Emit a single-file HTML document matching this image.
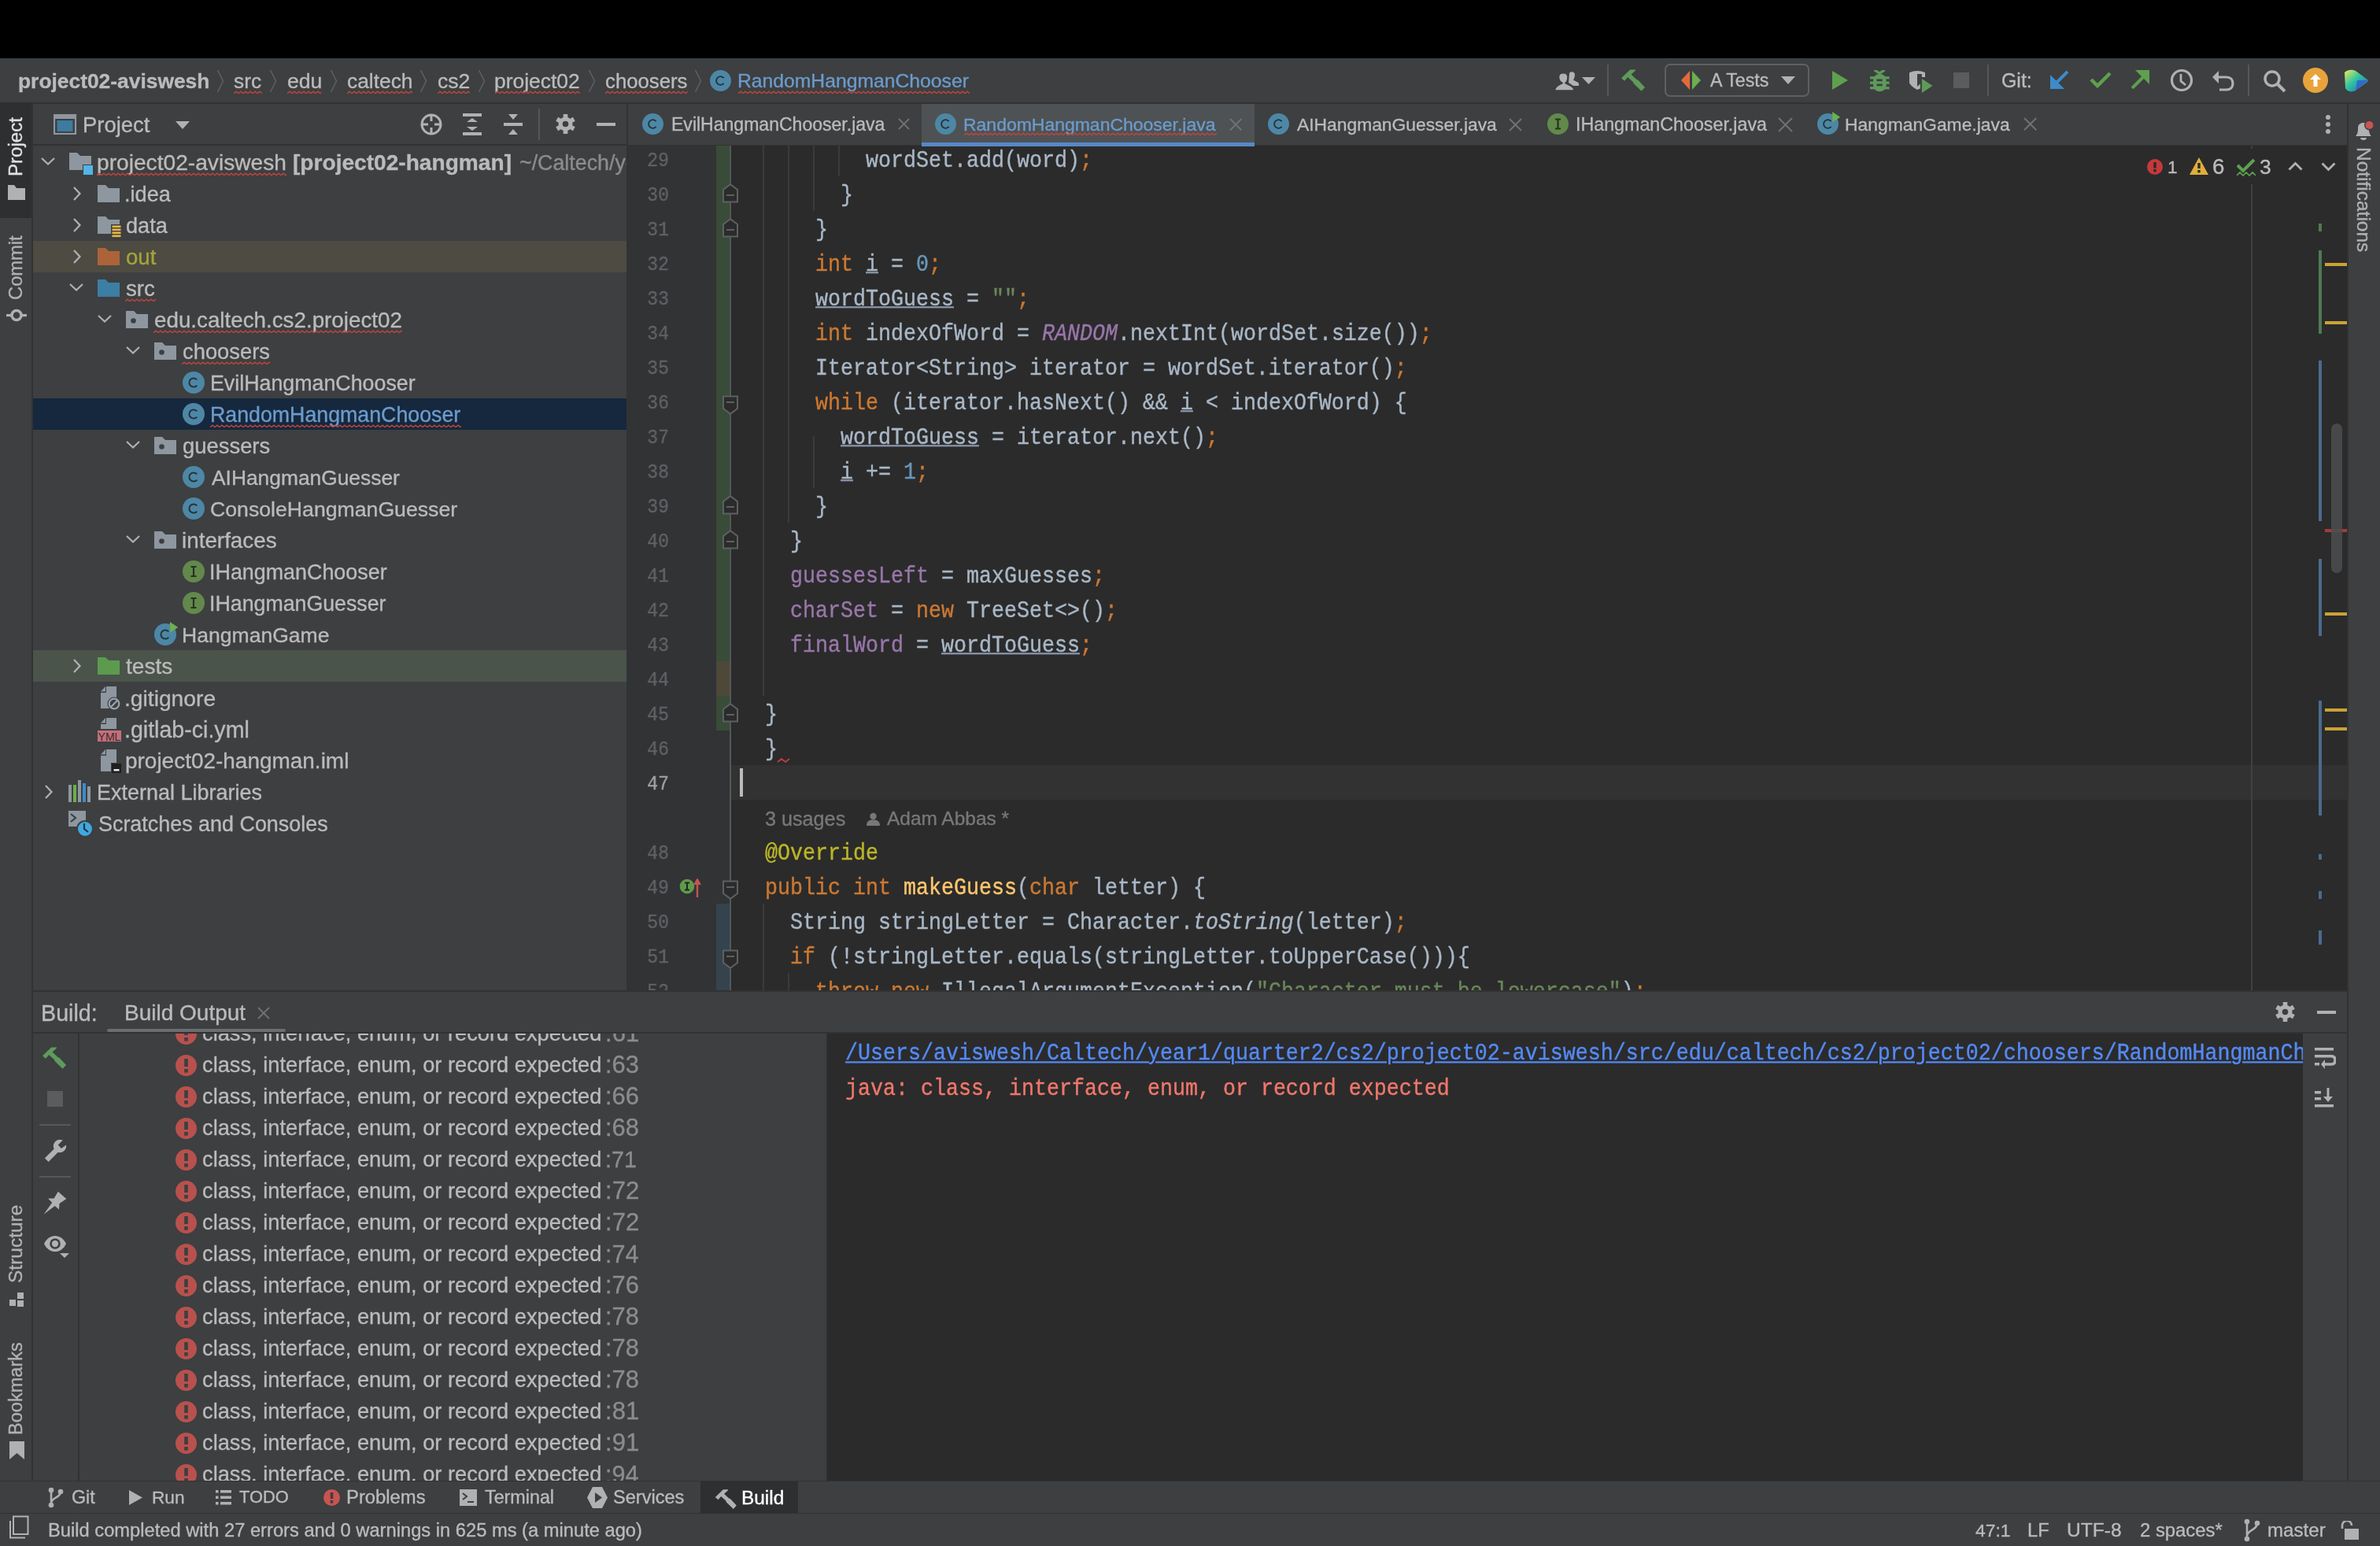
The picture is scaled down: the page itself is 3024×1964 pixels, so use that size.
<!DOCTYPE html>
<html><head><meta charset="utf-8"><style>
html,body{margin:0;padding:0;width:3024px;height:1964px;overflow:hidden;background:#000;}
body>div,body>svg{position:absolute;}
.t{white-space:pre;-webkit-text-stroke:0.35px currentColor;will-change:transform;}
</style></head><body>
<svg style="position:absolute;left:0;top:0;width:0;height:0"><defs><pattern id="sq" width="6" height="5" patternUnits="userSpaceOnUse"><path d="M0 3.8 L3 1.2 L6 3.8" fill="none" stroke="#C0443C" stroke-width="1.5"/></pattern></defs></svg>
<div style="left:0px;top:0px;width:3024px;height:74px;background:#000000;"></div>
<div style="left:0px;top:74px;width:3024px;height:56px;background:#3D3F41;"></div>
<div style="left:0px;top:130px;width:3024px;height:2px;background:#323232;"></div>
<div style="left:0px;top:132px;width:40px;height:1749px;background:#3D3F41;"></div>
<div style="left:40px;top:132px;width:2px;height:1749px;background:#323232;"></div>
<div style="left:0px;top:130px;width:40px;height:147px;background:#2D2F30;"></div>
<div style="left:2982px;top:132px;width:2px;height:1749px;background:#323232;"></div>
<div style="left:2984px;top:132px;width:40px;height:1749px;background:#3D3F41;"></div>
<div style="left:42px;top:132px;width:754px;height:1126px;background:#3D3F41;"></div>
<div style="left:42px;top:183px;width:754px;height:2px;background:#323232;"></div>
<div style="left:796px;top:132px;width:2px;height:1126px;background:#323232;"></div>
<div style="left:798px;top:132px;width:2184px;height:52px;background:#3D3F41;"></div>
<div style="left:798px;top:184px;width:2184px;height:2px;background:#323232;"></div>
<div style="left:796px;top:185px;width:131px;height:1073px;background:#313335;"></div>
<div style="left:927px;top:185px;width:2055px;height:1073px;background:#2B2B2B;"></div>
<div style="left:42px;top:1258px;width:2940px;height:2px;background:#323232;"></div>
<div style="left:42px;top:1260px;width:2940px;height:52px;background:#3D3F41;"></div>
<div style="left:42px;top:1311px;width:2940px;height:2px;background:#323232;"></div>
<div style="left:42px;top:1313px;width:57px;height:568px;background:#3D3F41;"></div>
<div style="left:99px;top:1313px;width:2px;height:568px;background:#323232;"></div>
<div style="left:101px;top:1313px;width:949px;height:568px;background:#3D3F41;"></div>
<div style="left:1050px;top:1313px;width:2px;height:568px;background:#2F2F2F;"></div>
<div style="left:1052px;top:1313px;width:1874px;height:568px;background:#2B2B2B;"></div>
<div style="left:2926px;top:1313px;width:56px;height:568px;background:#3D3F41;"></div>
<div style="left:0px;top:1881px;width:3024px;height:1px;background:#323232;"></div>
<div style="left:0px;top:1882px;width:3024px;height:40px;background:#3D3F41;"></div>
<div style="left:0px;top:1922px;width:3024px;height:1px;background:#323232;"></div>
<div style="left:0px;top:1923px;width:3024px;height:41px;background:#3D3F41;"></div>
<div class="t" style="left:22.82px;top:82.80px;font-family:'Liberation Sans', sans-serif;font-size:26.390px;line-height:40px;color:#BBBBBB;font-weight:bold;">project02-aviswesh</div>
<svg style="left:275px;top:88px;width:10px;height:30px" viewBox="0 0 10 30"><path d="M1.5 1 L8.5 15 L1.5 29" fill="none" stroke="#5D6064" stroke-width="1.6"/></svg>
<svg style="left:342px;top:88px;width:10px;height:30px" viewBox="0 0 10 30"><path d="M1.5 1 L8.5 15 L1.5 29" fill="none" stroke="#5D6064" stroke-width="1.6"/></svg>
<svg style="left:419px;top:88px;width:10px;height:30px" viewBox="0 0 10 30"><path d="M1.5 1 L8.5 15 L1.5 29" fill="none" stroke="#5D6064" stroke-width="1.6"/></svg>
<svg style="left:533px;top:88px;width:10px;height:30px" viewBox="0 0 10 30"><path d="M1.5 1 L8.5 15 L1.5 29" fill="none" stroke="#5D6064" stroke-width="1.6"/></svg>
<svg style="left:607px;top:88px;width:10px;height:30px" viewBox="0 0 10 30"><path d="M1.5 1 L8.5 15 L1.5 29" fill="none" stroke="#5D6064" stroke-width="1.6"/></svg>
<svg style="left:747px;top:88px;width:10px;height:30px" viewBox="0 0 10 30"><path d="M1.5 1 L8.5 15 L1.5 29" fill="none" stroke="#5D6064" stroke-width="1.6"/></svg>
<svg style="left:882px;top:88px;width:10px;height:30px" viewBox="0 0 10 30"><path d="M1.5 1 L8.5 15 L1.5 29" fill="none" stroke="#5D6064" stroke-width="1.6"/></svg>
<div class="t" style="left:297.47px;top:82.80px;font-family:'Liberation Sans', sans-serif;font-size:26.295px;line-height:40px;color:#BBBBBB;">src</div>
<svg style="left:297px;top:115px;width:36px;height:5px"><rect x="0" y="0" width="36" height="5" fill="url(#sq)"/></svg>
<div class="t" style="left:364.93px;top:82.81px;font-family:'Liberation Sans', sans-serif;font-size:26.627px;line-height:40px;color:#BBBBBB;">edu</div>
<svg style="left:365px;top:115px;width:43.60000000000002px;height:5px"><rect x="0" y="0" width="43.60000000000002" height="5" fill="url(#sq)"/></svg>
<div class="t" style="left:440.95px;top:82.80px;font-family:'Liberation Sans', sans-serif;font-size:26.365px;line-height:40px;color:#BBBBBB;">caltech</div>
<svg style="left:441px;top:115px;width:83px;height:5px"><rect x="0" y="0" width="83" height="5" fill="url(#sq)"/></svg>
<div class="t" style="left:555.64px;top:82.81px;font-family:'Liberation Sans', sans-serif;font-size:26.599px;line-height:40px;color:#BBBBBB;">cs2</div>
<svg style="left:555.7px;top:115px;width:41.09999999999991px;height:5px"><rect x="0" y="0" width="41.09999999999991" height="5" fill="url(#sq)"/></svg>
<div class="t" style="left:628.41px;top:82.80px;font-family:'Liberation Sans', sans-serif;font-size:26.450px;line-height:40px;color:#BBBBBB;">project02</div>
<svg style="left:629px;top:115px;width:108px;height:5px"><rect x="0" y="0" width="108" height="5" fill="url(#sq)"/></svg>
<div class="t" style="left:768.97px;top:82.80px;font-family:'Liberation Sans', sans-serif;font-size:25.755px;line-height:40px;color:#BBBBBB;">choosers</div>
<svg style="left:769px;top:115px;width:104.70000000000005px;height:5px"><rect x="0" y="0" width="104.70000000000005" height="5" fill="url(#sq)"/></svg>
<svg style="left:902px;top:89px;width:29px;height:27px;overflow:visible" viewBox="0 0 29 27"><circle cx="13.5" cy="13.5" r="13.5" fill="#4D87A5"/><path d="M17.64 10.03 A5.40 5.40 0 1 0 17.64 16.97" fill="none" stroke="#24333A" stroke-width="1.89"/></svg>
<div class="t" style="left:937.02px;top:82.78px;font-family:'Liberation Sans', sans-serif;font-size:24.715px;line-height:40px;color:#6C9BCB;">RandomHangmanChooser</div>
<svg style="left:938px;top:115px;width:294px;height:5px"><rect x="0" y="0" width="294" height="5" fill="url(#sq)"/></svg>
<svg style="left:1974px;top:90px;width:32px;height:25px" viewBox="0 0 32 25"><path d="M20 3.5 C20 0.5 27 0 27 5 C27 8 26 10 25 11.5 C26 13 33 14 33 18.5 V19 H25 L19 15 Z" fill="#AFB1B3"/><path d="M6.5 8 C6.5 1 18 1 18 8 C18 11 17 14 15 15.5 C16 17 25 18 26 24 V25 H1.5 V24 C3 18 10 17 11 15.5 C8 14 6.5 11 6.5 8 Z" fill="#AFB1B3" stroke="#3C3F41" stroke-width="1.6"/></svg>
<svg style="left:2010px;top:98px;width:17px;height:10px" viewBox="0 0 17 10"><path d="M0 0 H17 L8.5 9 Z" fill="#AFB1B3"/></svg>
<div style="left:2042px;top:82px;width:2px;height:40px;background:#555759;"></div>
<svg style="left:2058px;top:87px;width:33.0px;height:30.0px" viewBox="0 0 33 30"><path d="M2 12.3 L13.2 1.4 L20 1.4 L20 2.6 L14.6 7.6 L21.4 14 L23.2 14.4 L32 24 L27.6 28.8 L17.3 18.8 L17.3 17.6 L10.2 11.1 L6.1 15.8 Z" fill="#5E9B5A"/></svg>
<div style="left:2115px;top:81px;width:184px;height:42px;background:transparent;box-sizing:border-box;border:2px solid #5E6062;border-radius:7px;"></div>
<svg style="left:2136px;top:90px;width:25px;height:24px" viewBox="0 0 25 24"><path d="M11 0 L0 12 L11 24 Z" fill="#E06B3A"/><path d="M14 0 L25 12 L14 24 Z" fill="#6BAF4F"/></svg>
<div class="t" style="left:2172.50px;top:82.27px;font-family:'Liberation Sans', sans-serif;font-size:23.239px;line-height:40px;color:#BBBBBB;">A Tests</div>
<svg style="left:2263px;top:97px;width:18px;height:11px" viewBox="0 0 18 11"><path d="M0 0 H18 L9 10 Z" fill="#AFB1B3"/></svg>
<svg style="left:2328px;top:90px;width:20px;height:24px" viewBox="0 0 20 24"><path d="M0 0 L20 12 L0 24 Z" fill="#5FA04E"/></svg>
<svg style="left:2376px;top:88.5px;width:25px;height:28px" viewBox="0 0 25 28"><g fill="#5E9B5A"><path d="M5.6 0 L12.1 4 L18.6 0" fill="none" stroke="#5E9B5A" stroke-width="3.2"/><rect x="4.1" y="5" width="16.5" height="22.3" rx="8"/><rect x="0" y="8.2" width="24.6" height="3.2"/><rect x="0" y="14.6" width="24.6" height="3.2"/><rect x="0" y="21.2" width="24.6" height="3.2"/></g><g fill="#3C3F41"><rect x="8.5" y="11.5" width="7.3" height="2.7"/><rect x="8.5" y="17.6" width="7.3" height="2.7"/></g></svg>
<svg style="left:2426px;top:89.9px;width:30px;height:29px" viewBox="0 0 30 29"><path d="M0 2.3 Q5 0 10 0 Q15 0 20 2.1 V8.1 H15.9 V4 L10 4 V20.1 L13.8 16.4 V22.4 L10 24.1 Q3 20.5 0 15.5 Z" fill="#AFB1B3"/><path d="M15.9 10 L29.5 19 L15.9 28 Z" fill="#5E9B5A"/></svg>
<div style="left:2482px;top:92px;width:20px;height:20px;background:#5A5C5E;"></div>
<div style="left:2525px;top:82px;width:2px;height:40px;background:#555759;"></div>
<div class="t" style="left:2543.26px;top:82.29px;font-family:'Liberation Sans', sans-serif;font-size:24.897px;line-height:40px;color:#BBBBBB;">Git:</div>
<svg style="left:2605px;top:89px;width:23px;height:24px" viewBox="0 0 23 24"><path d="M22 2 L6 18" stroke="#3D8BCB" stroke-width="4" fill="none"/><path d="M0 6 V24 H18 Z" fill="#3D8BCB"/></svg>
<svg style="left:2655px;top:90px;width:28px;height:22px" viewBox="0 0 28 22"><path d="M2 11 L10 19 L26 3" stroke="#5FA04E" stroke-width="4.5" fill="none"/></svg>
<svg style="left:2708px;top:89px;width:23px;height:24px" viewBox="0 0 23 24"><path d="M1 23 L17 7" stroke="#5FA04E" stroke-width="4" fill="none"/><path d="M5 0 H23 V18 Z" fill="#5FA04E"/></svg>
<svg style="left:2757px;top:87px;width:30px;height:30px" viewBox="0 0 30 30"><circle cx="15" cy="15" r="12.5" fill="none" stroke="#AFB1B3" stroke-width="3.2"/><path d="M14 7 V16 L20 21" fill="none" stroke="#AFB1B3" stroke-width="2.8"/></svg>
<svg style="left:2811px;top:88px;width:28px;height:28px" viewBox="0 0 28 28"><path d="M6 10 H18 C23 10 26 13 26 18 C26 23 23 26 18 26 H9" fill="none" stroke="#AFB1B3" stroke-width="3.2"/><path d="M0 10 L8 2 V18 Z" fill="#AFB1B3"/></svg>
<div style="left:2856px;top:82px;width:2px;height:40px;background:#555759;"></div>
<svg style="left:2875px;top:88px;width:30px;height:30px" viewBox="0 0 30 30"><circle cx="12" cy="12" r="9" fill="none" stroke="#AFB1B3" stroke-width="3.5"/><path d="M18.5 18.5 L28 28" stroke="#AFB1B3" stroke-width="4"/></svg>
<svg style="left:2926px;top:86px;width:32px;height:32px" viewBox="0 0 32 32"><circle cx="16" cy="16" r="16" fill="#E8A33B"/><path d="M16 8 L23 15 H18.5 V24 H13.5 V15 H9 Z" fill="#FFFFFF"/></svg>
<svg style="left:2979px;top:88px;width:30px;height:29px" viewBox="0 0 30 29"><defs><linearGradient id="lg1" x1="0" y1="0" x2="1" y2="1"><stop offset="0" stop-color="#F3E85A"/><stop offset="0.45" stop-color="#2FC5A0"/><stop offset="1" stop-color="#2A56C8"/></linearGradient></defs><path d="M0 4 C4 0 10 0 14 2 L29 13 C30 14 30 15 29 16 L14 27 C8 30 3 28 1 24 Z" fill="url(#lg1)"/><path d="M16 14 L29 14 L14 27 Z" fill="#2F5FD0" opacity="0.8"/></svg>
<svg style="left:68px;top:145px;width:30px;height:26px" viewBox="0 0 30 26"><rect x="1" y="1" width="27" height="24" fill="none" stroke="#8E979F" stroke-width="2.2"/><rect x="1" y="1" width="27" height="5" fill="#8E979F"/><rect x="4.5" y="8" width="20" height="14" fill="#3D7CA0"/></svg>
<div class="t" style="left:105.41px;top:139.12px;font-family:'Liberation Sans', sans-serif;font-size:27.418px;line-height:40px;color:#BBBBBB;">Project</div>
<svg style="left:223px;top:154px;width:18px;height:11px" viewBox="0 0 18 11"><path d="M0 0 H18 L9 10 Z" fill="#AFB1B3"/></svg>
<svg style="left:534px;top:144px;width:28px;height:28px" viewBox="0 0 28 28"><circle cx="14" cy="14" r="12" fill="none" stroke="#AFB1B3" stroke-width="3"/><path d="M14 1 V10 M14 18 V27 M1 14 H10 M18 14 H27" stroke="#AFB1B3" stroke-width="3"/></svg>
<svg style="left:588px;top:144px;width:24px;height:28px" viewBox="0 0 24 28"><rect x="0" y="0" width="24" height="4" fill="#AFB1B3"/><rect x="0" y="24" width="24" height="4" fill="#AFB1B3"/><path d="M5 11 L12 6 L19 11 Z M5 17 L12 22 L19 17 Z" fill="#AFB1B3"/></svg>
<svg style="left:640px;top:145px;width:24px;height:26px" viewBox="0 0 24 26"><rect x="0" y="11" width="24" height="4" fill="#AFB1B3"/><path d="M6 0 H18 L12 7 Z M6 26 H18 L12 19 Z" fill="#AFB1B3"/></svg>
<div style="left:684px;top:138px;width:2px;height:40px;background:#555759;"></div>
<svg style="left:706px;top:145px;width:25px;height:25px" viewBox="0 0 25 25"><rect x="9.7" y="0" width="5.6" height="12.5" fill="#AFB1B3" transform="rotate(0 12.5 12.5)"/><rect x="9.7" y="0" width="5.6" height="12.5" fill="#AFB1B3" transform="rotate(60 12.5 12.5)"/><rect x="9.7" y="0" width="5.6" height="12.5" fill="#AFB1B3" transform="rotate(120 12.5 12.5)"/><rect x="9.7" y="0" width="5.6" height="12.5" fill="#AFB1B3" transform="rotate(180 12.5 12.5)"/><rect x="9.7" y="0" width="5.6" height="12.5" fill="#AFB1B3" transform="rotate(240 12.5 12.5)"/><rect x="9.7" y="0" width="5.6" height="12.5" fill="#AFB1B3" transform="rotate(300 12.5 12.5)"/><circle cx="12.5" cy="12.5" r="9.0" fill="#AFB1B3"/><circle cx="12.5" cy="12.5" r="3.8" fill="#3C3F41"/></svg>
<div style="left:758px;top:156px;width:24px;height:4px;background:#AFB1B3;"></div>
<div style="left:42px;top:306px;width:754px;height:40px;background:#4D4B42;"></div>
<div style="left:42px;top:506px;width:754px;height:40px;background:#16283D;"></div>
<div style="left:42px;top:826px;width:754px;height:40px;background:#4A544B;"></div>
<svg style="left:52px;top:198.5px;width:18px;height:12px" viewBox="0 0 18 12"><path d="M1 2 L9 9.5 L17 2" fill="none" stroke="#AFB1B3" stroke-width="2.2"/></svg>
<svg style="left:88px;top:194px;width:32px;height:30px;overflow:visible" viewBox="0 0 32 30"><path d="M0 0 H10 L14 4 H28 V22 H0 Z" fill="#8E979F"/></svg>
<div style="left:105px;top:209px;width:14px;height:14px;background:#52B4E8;box-sizing:border-box;border:1.5px solid #3C3F41;"></div>
<div class="t" style="left:123.01px;top:187.32px;font-family:'Liberation Sans', sans-serif;font-size:28.164px;line-height:40px;color:#BBBBBB;">project02-aviswesh</div>
<div class="t" style="left:371.59px;top:187.32px;font-family:'Liberation Sans', sans-serif;font-size:28.129px;line-height:40px;color:#BBBBBB;font-weight:bold;">[project02-hangman]</div>
<div class="t" style="left:659.93px;top:187.31px;font-family:'Liberation Sans', sans-serif;font-size:26.800px;line-height:40px;color:#8C8C8C;width:136.07px;overflow:hidden;">~/Caltech/year1/quarter2/cs2/project02-aviswesh</div>
<svg style="left:123px;top:219px;width:241px;height:5px"><rect x="0" y="0" width="241" height="5" fill="url(#sq)"/></svg>
<svg style="left:91.5px;top:237px;width:12px;height:18px" viewBox="0 0 12 18"><path d="M2 1 L9.5 9 L2 17" fill="none" stroke="#AFB1B3" stroke-width="2.2"/></svg>
<svg style="left:123.5px;top:235px;width:32px;height:30px;overflow:visible" viewBox="0 0 32 30"><path d="M0 0 H10 L14 4 H28 V22 H0 Z" fill="#8E979F"/></svg>
<div class="t" style="left:158.26px;top:227.31px;font-family:'Liberation Sans', sans-serif;font-size:27.133px;line-height:40px;color:#BBBBBB;">.idea</div>
<svg style="left:91.5px;top:277px;width:12px;height:18px" viewBox="0 0 12 18"><path d="M2 1 L9.5 9 L2 17" fill="none" stroke="#AFB1B3" stroke-width="2.2"/></svg>
<svg style="left:123.5px;top:275px;width:32px;height:30px;overflow:visible" viewBox="0 0 32 30"><path d="M0 0 H10 L14 4 H28 V22 H0 Z" fill="#8E979F"/></svg>
<svg style="left:141px;top:285px;width:14px;height:18px" viewBox="0 0 14 18"><rect x="0" y="0" width="14" height="18" fill="#3C3F41"/><rect x="1.5" y="1.5" width="11" height="2.6" fill="#E8B64A"/><rect x="1.5" y="5.5" width="11" height="2.6" fill="#E8B64A"/><rect x="1.5" y="9.5" width="11" height="2.6" fill="#E8B64A"/><rect x="1.5" y="13.5" width="11" height="2.6" fill="#E8B64A"/></svg>
<div class="t" style="left:159.62px;top:267.31px;font-family:'Liberation Sans', sans-serif;font-size:27.118px;line-height:40px;color:#BBBBBB;">data</div>
<svg style="left:91.5px;top:317px;width:12px;height:18px" viewBox="0 0 12 18"><path d="M2 1 L9.5 9 L2 17" fill="none" stroke="#AFB1B3" stroke-width="2.2"/></svg>
<svg style="left:123.5px;top:315px;width:32px;height:30px;overflow:visible" viewBox="0 0 32 30"><path d="M0 0 H10 L14 4 H28 V22 H0 Z" fill="#AC6339"/></svg>
<div class="t" style="left:159.60px;top:307.32px;font-family:'Liberation Sans', sans-serif;font-size:27.583px;line-height:40px;color:#A5A33B;">out</div>
<svg style="left:88px;top:358.5px;width:18px;height:12px" viewBox="0 0 18 12"><path d="M1 2 L9 9.5 L17 2" fill="none" stroke="#AFB1B3" stroke-width="2.2"/></svg>
<svg style="left:123.5px;top:355px;width:32px;height:30px;overflow:visible" viewBox="0 0 32 30"><path d="M0 0 H10 L14 4 H28 V22 H0 Z" fill="#3D7EA4"/></svg>
<div class="t" style="left:160.15px;top:347.32px;font-family:'Liberation Sans', sans-serif;font-size:27.687px;line-height:40px;color:#BBBBBB;">src</div>
<svg style="left:159px;top:379px;width:39px;height:5px"><rect x="0" y="0" width="39" height="5" fill="url(#sq)"/></svg>
<svg style="left:124px;top:398.5px;width:18px;height:12px" viewBox="0 0 18 12"><path d="M1 2 L9 9.5 L17 2" fill="none" stroke="#AFB1B3" stroke-width="2.2"/></svg>
<svg style="left:159.5px;top:395px;width:32px;height:30px;overflow:visible" viewBox="0 0 32 30"><path d="M0 0 H10 L14 4 H28 V22 H0 Z" fill="#8E979F"/><circle cx="9.5" cy="12.5" r="3.3" fill="#3C3F41"/></svg>
<div class="t" style="left:195.59px;top:387.32px;font-family:'Liberation Sans', sans-serif;font-size:27.785px;line-height:40px;color:#BBBBBB;">edu.caltech.cs2.project02</div>
<svg style="left:195px;top:419px;width:316px;height:5px"><rect x="0" y="0" width="316" height="5" fill="url(#sq)"/></svg>
<svg style="left:160px;top:438.5px;width:18px;height:12px" viewBox="0 0 18 12"><path d="M1 2 L9 9.5 L17 2" fill="none" stroke="#AFB1B3" stroke-width="2.2"/></svg>
<svg style="left:195.5px;top:435px;width:32px;height:30px;overflow:visible" viewBox="0 0 32 30"><path d="M0 0 H10 L14 4 H28 V22 H0 Z" fill="#8E979F"/><circle cx="9.5" cy="12.5" r="3.3" fill="#3C3F41"/></svg>
<div class="t" style="left:231.61px;top:427.31px;font-family:'Liberation Sans', sans-serif;font-size:27.360px;line-height:40px;color:#BBBBBB;">choosers</div>
<svg style="left:231px;top:459px;width:112px;height:5px"><rect x="0" y="0" width="112" height="5" fill="url(#sq)"/></svg>
<svg style="left:231.5px;top:472px;width:30px;height:28px;overflow:visible" viewBox="0 0 30 28"><circle cx="14.0" cy="14.0" r="14.0" fill="#4D87A5"/><path d="M18.29 10.40 A5.60 5.60 0 1 0 18.29 17.60" fill="none" stroke="#24333A" stroke-width="1.96"/></svg>
<div class="t" style="left:266.56px;top:467.31px;font-family:'Liberation Sans', sans-serif;font-size:26.811px;line-height:40px;color:#BBBBBB;">EvilHangmanChooser</div>
<svg style="left:231.5px;top:512px;width:30px;height:28px;overflow:visible" viewBox="0 0 30 28"><circle cx="14.0" cy="14.0" r="14.0" fill="#4D87A5"/><path d="M18.29 10.40 A5.60 5.60 0 1 0 18.29 17.60" fill="none" stroke="#24333A" stroke-width="1.96"/></svg>
<div class="t" style="left:266.56px;top:507.31px;font-family:'Liberation Sans', sans-serif;font-size:26.766px;line-height:40px;color:#6C9BCB;">RandomHangmanChooser</div>
<svg style="left:267px;top:539px;width:319px;height:5px"><rect x="0" y="0" width="319" height="5" fill="url(#sq)"/></svg>
<svg style="left:160px;top:558.5px;width:18px;height:12px" viewBox="0 0 18 12"><path d="M1 2 L9 9.5 L17 2" fill="none" stroke="#AFB1B3" stroke-width="2.2"/></svg>
<svg style="left:195.5px;top:555px;width:32px;height:30px;overflow:visible" viewBox="0 0 32 30"><path d="M0 0 H10 L14 4 H28 V22 H0 Z" fill="#8E979F"/><circle cx="9.5" cy="12.5" r="3.3" fill="#3C3F41"/></svg>
<div class="t" style="left:231.60px;top:547.32px;font-family:'Liberation Sans', sans-serif;font-size:27.410px;line-height:40px;color:#BBBBBB;">guessers</div>
<svg style="left:231.5px;top:592px;width:30px;height:28px;overflow:visible" viewBox="0 0 30 28"><circle cx="14.0" cy="14.0" r="14.0" fill="#4D87A5"/><path d="M18.29 10.40 A5.60 5.60 0 1 0 18.29 17.60" fill="none" stroke="#24333A" stroke-width="1.96"/></svg>
<div class="t" style="left:268.70px;top:587.30px;font-family:'Liberation Sans', sans-serif;font-size:26.373px;line-height:40px;color:#BBBBBB;">AIHangmanGuesser</div>
<svg style="left:231.5px;top:632px;width:30px;height:28px;overflow:visible" viewBox="0 0 30 28"><circle cx="14.0" cy="14.0" r="14.0" fill="#4D87A5"/><path d="M18.29 10.40 A5.60 5.60 0 1 0 18.29 17.60" fill="none" stroke="#24333A" stroke-width="1.96"/></svg>
<div class="t" style="left:267.37px;top:627.31px;font-family:'Liberation Sans', sans-serif;font-size:26.678px;line-height:40px;color:#BBBBBB;">ConsoleHangmanGuesser</div>
<svg style="left:160px;top:678.5px;width:18px;height:12px" viewBox="0 0 18 12"><path d="M1 2 L9 9.5 L17 2" fill="none" stroke="#AFB1B3" stroke-width="2.2"/></svg>
<svg style="left:195.5px;top:675px;width:32px;height:30px;overflow:visible" viewBox="0 0 32 30"><path d="M0 0 H10 L14 4 H28 V22 H0 Z" fill="#8E979F"/><circle cx="9.5" cy="12.5" r="3.3" fill="#3C3F41"/></svg>
<div class="t" style="left:231.03px;top:667.32px;font-family:'Liberation Sans', sans-serif;font-size:27.842px;line-height:40px;color:#BBBBBB;">interfaces</div>
<svg style="left:231.5px;top:712px;width:28px;height:28px" viewBox="0 0 28 28"><circle cx="14.0" cy="14.0" r="14.0" fill="#62894B"/><path d="M10.5 8.0 H17.5 M14.0 8.0 V20.0 M10.5 20.0 H17.5" stroke="#27331F" stroke-width="2.2" fill="none"/></svg>
<div class="t" style="left:266.28px;top:707.31px;font-family:'Liberation Sans', sans-serif;font-size:26.886px;line-height:40px;color:#BBBBBB;">IHangmanChooser</div>
<svg style="left:231.5px;top:752px;width:28px;height:28px" viewBox="0 0 28 28"><circle cx="14.0" cy="14.0" r="14.0" fill="#62894B"/><path d="M10.5 8.0 H17.5 M14.0 8.0 V20.0 M10.5 20.0 H17.5" stroke="#27331F" stroke-width="2.2" fill="none"/></svg>
<div class="t" style="left:266.29px;top:747.31px;font-family:'Liberation Sans', sans-serif;font-size:26.767px;line-height:40px;color:#BBBBBB;">IHangmanGuesser</div>
<svg style="left:196px;top:792px;width:30px;height:28px;overflow:visible" viewBox="0 0 30 28"><circle cx="14.0" cy="14.0" r="14.0" fill="#4D87A5"/><path d="M18.29 10.40 A5.60 5.60 0 1 0 18.29 17.60" fill="none" stroke="#24333A" stroke-width="1.96"/><path d="M19.8 -2.0 L30.3 5.0 L20.2 11.6 Z" fill="#6DB04F"/></svg>
<div class="t" style="left:230.57px;top:787.31px;font-family:'Liberation Sans', sans-serif;font-size:26.574px;line-height:40px;color:#BBBBBB;">HangmanGame</div>
<svg style="left:91.5px;top:837px;width:12px;height:18px" viewBox="0 0 12 18"><path d="M2 1 L9.5 9 L2 17" fill="none" stroke="#AFB1B3" stroke-width="2.2"/></svg>
<svg style="left:123.5px;top:835px;width:32px;height:30px;overflow:visible" viewBox="0 0 32 30"><path d="M0 0 H10 L14 4 H28 V22 H0 Z" fill="#5C9B4E"/></svg>
<div class="t" style="left:160.42px;top:827.32px;font-family:'Liberation Sans', sans-serif;font-size:28.043px;line-height:40px;color:#BBBBBB;">tests</div>
<svg style="left:128px;top:872px;width:30px;height:31px" viewBox="0 0 30 31"><path d="M7 0 H20 V28 H0 V8 H7 Z" fill="#8E979F"/><path d="M0 6.5 L6 0 V6.5 Z" fill="#8E979F"/><circle cx="17" cy="22" r="8.5" fill="#3C3F41"/><circle cx="17" cy="22" r="6.3" fill="none" stroke="#9AA3AB" stroke-width="2.2"/><path d="M12.8 26.2 L21.2 17.8" stroke="#9AA3AB" stroke-width="2.2"/></svg>
<div class="t" style="left:158.16px;top:867.32px;font-family:'Liberation Sans', sans-serif;font-size:28.237px;line-height:40px;color:#BBBBBB;">.gitignore</div>
<svg style="left:124px;top:912px;width:31px;height:31px" viewBox="0 0 31 31"><path d="M11 0 H24 V14 H4 V8 H11 Z" fill="#8E979F"/><path d="M4 6.5 L10 0 V6.5 Z" fill="#8E979F"/><rect x="0" y="16" width="30" height="14" fill="#C4707A"/><text x="15" y="28.8" font-family="Liberation Sans" font-size="14" fill="#3B2A2D" text-anchor="middle">YML</text></svg>
<div class="t" style="left:158.13px;top:907.33px;font-family:'Liberation Sans', sans-serif;font-size:28.587px;line-height:40px;color:#BBBBBB;">.gitlab-ci.yml</div>
<svg style="left:128px;top:952px;width:27px;height:31px" viewBox="0 0 27 31"><path d="M7 0 H20 V28 H0 V8 H7 Z" fill="#8E979F"/><path d="M0 6.5 L6 0 V6.5 Z" fill="#8E979F"/><rect x="13" y="17" width="13" height="13" fill="#3C3F41"/><rect x="14" y="18" width="12" height="12" fill="#1F1F1F"/><rect x="16.5" y="25" width="7" height="2.5" fill="#E8E8E8"/></svg>
<div class="t" style="left:159.02px;top:947.32px;font-family:'Liberation Sans', sans-serif;font-size:27.961px;line-height:40px;color:#BBBBBB;">project02-hangman.iml</div>
<svg style="left:55.5px;top:997px;width:12px;height:18px" viewBox="0 0 12 18"><path d="M2 1 L9.5 9 L2 17" fill="none" stroke="#AFB1B3" stroke-width="2.2"/></svg>
<svg style="left:87px;top:991px;width:30px;height:28px" viewBox="0 0 30 28"><rect x="0" y="6" width="4" height="22" fill="#8E979F"/><rect x="6" y="6" width="4" height="22" fill="#6DAF4A"/><rect x="12" y="0" width="4" height="28" fill="#8E979F"/><rect x="18" y="4" width="4" height="24" fill="#3D8BCB"/><rect x="24" y="8" width="4" height="20" fill="#8E979F"/></svg>
<div class="t" style="left:123.44px;top:987.31px;font-family:'Liberation Sans', sans-serif;font-size:26.997px;line-height:40px;color:#BBBBBB;">External Libraries</div>
<svg style="left:87px;top:1030px;width:32px;height:34px" viewBox="0 0 32 34"><rect x="0" y="0" width="22" height="20" fill="#8E979F"/><path d="M3 4 L9 9 L3 14" fill="none" stroke="#3C3F41" stroke-width="2.2"/><circle cx="21" cy="23" r="11" fill="#3C3F41"/><circle cx="21" cy="23" r="9" fill="#40A8E0"/><path d="M20 16 V23 L25 27" stroke="#1E3342" stroke-width="2.2" fill="none"/></svg>
<div class="t" style="left:124.52px;top:1027.31px;font-family:'Liberation Sans', sans-serif;font-size:26.919px;line-height:40px;color:#BBBBBB;">Scratches and Consoles</div>
<div style="left:796px;top:186px;width:2px;height:40px;background:#323232;"></div>
<div style="left:1170.7px;top:132px;width:423.3px;height:52px;background:#4E5254;"></div>
<div style="left:1170.7px;top:181px;width:423.3px;height:5px;background:#5888C6;"></div>
<svg style="left:816px;top:144px;width:29px;height:27px;overflow:visible" viewBox="0 0 29 27"><circle cx="13.5" cy="13.5" r="13.5" fill="#4D87A5"/><path d="M17.64 10.03 A5.40 5.40 0 1 0 17.64 16.97" fill="none" stroke="#24333A" stroke-width="1.89"/></svg>
<div class="t" style="left:852.66px;top:138.27px;font-family:'Liberation Sans', sans-serif;font-size:23.044px;line-height:40px;color:#BBBBBB;">EvilHangmanChooser.java</div>
<svg style="left:1140.5px;top:150.45000000000005px;width:15.099999999999909px;height:15.099999999999909px" viewBox="0 0 15.099999999999909 15.099999999999909"><path d="M1 1 L14.099999999999909 14.099999999999909 M14.099999999999909 1 L1 14.099999999999909" stroke="#6E7275" stroke-width="2"/></svg>
<svg style="left:1188px;top:144px;width:29px;height:27px;overflow:visible" viewBox="0 0 29 27"><circle cx="13.5" cy="13.5" r="13.5" fill="#4D87A5"/><path d="M17.64 10.03 A5.40 5.40 0 1 0 17.64 16.97" fill="none" stroke="#24333A" stroke-width="1.89"/></svg>
<div class="t" style="left:1224.16px;top:138.26px;font-family:'Liberation Sans', sans-serif;font-size:22.989px;line-height:40px;color:#6C9BCB;">RandomHangmanChooser.java</div>
<svg style="left:1561.6px;top:149.79999999999995px;width:16.40000000000009px;height:16.40000000000009px" viewBox="0 0 16.40000000000009 16.40000000000009"><path d="M1 1 L15.400000000000091 15.400000000000091 M15.400000000000091 1 L1 15.400000000000091" stroke="#6E7275" stroke-width="2"/></svg>
<svg style="left:1610.5px;top:144px;width:29px;height:27px;overflow:visible" viewBox="0 0 29 27"><circle cx="13.5" cy="13.5" r="13.5" fill="#4D87A5"/><path d="M17.64 10.03 A5.40 5.40 0 1 0 17.64 16.97" fill="none" stroke="#24333A" stroke-width="1.89"/></svg>
<div class="t" style="left:1648.00px;top:138.26px;font-family:'Liberation Sans', sans-serif;font-size:22.840px;line-height:40px;color:#BBBBBB;">AIHangmanGuesser.java</div>
<svg style="left:1917px;top:149.5px;width:17px;height:17px" viewBox="0 0 17 17"><path d="M1 1 L16 16 M16 1 L1 16" stroke="#6E7275" stroke-width="2"/></svg>
<svg style="left:1966px;top:144px;width:27px;height:27px" viewBox="0 0 27 27"><circle cx="13.5" cy="13.5" r="13.5" fill="#62894B"/><path d="M10.0 7.5 H17.0 M13.5 7.5 V19.5 M10.0 19.5 H17.0" stroke="#27331F" stroke-width="2.2" fill="none"/></svg>
<div class="t" style="left:2001.91px;top:138.27px;font-family:'Liberation Sans', sans-serif;font-size:23.252px;line-height:40px;color:#BBBBBB;">IHangmanChooser.java</div>
<svg style="left:2259px;top:148.5px;width:19px;height:19px" viewBox="0 0 19 19"><path d="M1 1 L18 18 M18 1 L1 18" stroke="#6E7275" stroke-width="2"/></svg>
<svg style="left:2308.6px;top:144px;width:29px;height:27px;overflow:visible" viewBox="0 0 29 27"><circle cx="13.5" cy="13.5" r="13.5" fill="#4D87A5"/><path d="M17.64 10.03 A5.40 5.40 0 1 0 17.64 16.97" fill="none" stroke="#24333A" stroke-width="1.89"/><path d="M19.1 -1.9 L29.2 4.8 L19.5 11.2 Z" fill="#6DB04F"/></svg>
<div class="t" style="left:2344.17px;top:138.26px;font-family:'Liberation Sans', sans-serif;font-size:22.869px;line-height:40px;color:#BBBBBB;">HangmanGame.java</div>
<svg style="left:2570.7px;top:149.3499999999999px;width:17.300000000000182px;height:17.300000000000182px" viewBox="0 0 17.300000000000182 17.300000000000182"><path d="M1 1 L16.300000000000182 16.300000000000182 M16.300000000000182 1 L1 16.300000000000182" stroke="#6E7275" stroke-width="2"/></svg>
<svg style="left:1225px;top:168px;width:321px;height:5px"><rect x="0" y="0" width="321" height="5" fill="url(#sq)"/></svg>
<div style="left:2955px;top:145.8px;width:6.4px;height:6.4px;background:#AFB1B3;border-radius:50%;"></div>
<div style="left:2955px;top:154.8px;width:6.4px;height:6.4px;background:#AFB1B3;border-radius:50%;"></div>
<div style="left:2955px;top:163.8px;width:6.4px;height:6.4px;background:#AFB1B3;border-radius:50%;"></div>
<div style="left:910px;top:185px;width:17px;height:655px;background:#384C38;"></div>
<div style="left:910px;top:840px;width:17px;height:44px;background:#4D4838;"></div>
<div style="left:910px;top:884px;width:17px;height:44px;background:#384C38;"></div>
<div style="left:910px;top:1148px;width:17px;height:110px;background:#34434E;"></div>
<div style="left:929px;top:972px;width:2053px;height:44px;background:#323232;"></div>
<div style="left:927px;top:185px;width:2px;height:1073px;background:#555759;"></div>
<svg style="left:918px;top:233px;width:20px;height:25px" viewBox="0 0 20 25"><path d="M1 23.5 V8 L10 1.2 L19 8 V23.5 Z" fill="#2B2B2B" stroke="#5D6063" stroke-width="2"/><path d="M5 15 H15" stroke="#5D6063" stroke-width="2"/></svg>
<svg style="left:918px;top:277px;width:20px;height:25px" viewBox="0 0 20 25"><path d="M1 23.5 V8 L10 1.2 L19 8 V23.5 Z" fill="#2B2B2B" stroke="#5D6063" stroke-width="2"/><path d="M5 15 H15" stroke="#5D6063" stroke-width="2"/></svg>
<svg style="left:918px;top:629px;width:20px;height:25px" viewBox="0 0 20 25"><path d="M1 23.5 V8 L10 1.2 L19 8 V23.5 Z" fill="#2B2B2B" stroke="#5D6063" stroke-width="2"/><path d="M5 15 H15" stroke="#5D6063" stroke-width="2"/></svg>
<svg style="left:918px;top:673px;width:20px;height:25px" viewBox="0 0 20 25"><path d="M1 23.5 V8 L10 1.2 L19 8 V23.5 Z" fill="#2B2B2B" stroke="#5D6063" stroke-width="2"/><path d="M5 15 H15" stroke="#5D6063" stroke-width="2"/></svg>
<svg style="left:918px;top:893px;width:20px;height:25px" viewBox="0 0 20 25"><path d="M1 23.5 V8 L10 1.2 L19 8 V23.5 Z" fill="#2B2B2B" stroke="#5D6063" stroke-width="2"/><path d="M5 15 H15" stroke="#5D6063" stroke-width="2"/></svg>
<svg style="left:918px;top:501.5px;width:20px;height:25px" viewBox="0 0 20 25"><path d="M1 1.5 V17 L10 23.8 L19 17 V1.5 Z" fill="#2B2B2B" stroke="#5D6063" stroke-width="2"/><path d="M5 9 H15" stroke="#5D6063" stroke-width="2"/></svg>
<svg style="left:918px;top:1117.5px;width:20px;height:25px" viewBox="0 0 20 25"><path d="M1 1.5 V17 L10 23.8 L19 17 V1.5 Z" fill="#2B2B2B" stroke="#5D6063" stroke-width="2"/><path d="M5 9 H15" stroke="#5D6063" stroke-width="2"/></svg>
<svg style="left:918px;top:1205.5px;width:20px;height:25px" viewBox="0 0 20 25"><path d="M1 1.5 V17 L10 23.8 L19 17 V1.5 Z" fill="#2B2B2B" stroke="#5D6063" stroke-width="2"/><path d="M5 9 H15" stroke="#5D6063" stroke-width="2"/></svg>
<div class="t" style="left:750px;top:181.7px;width:100px;text-align:right;font-family:'Liberation Mono', monospace;font-size:26.67px;line-height:44px;color:#606366;transform:scaleX(0.87);transform-origin:100% 50%;">29</div>
<div class="t" style="left:750px;top:225.7px;width:100px;text-align:right;font-family:'Liberation Mono', monospace;font-size:26.67px;line-height:44px;color:#606366;transform:scaleX(0.87);transform-origin:100% 50%;">30</div>
<div class="t" style="left:750px;top:269.7px;width:100px;text-align:right;font-family:'Liberation Mono', monospace;font-size:26.67px;line-height:44px;color:#606366;transform:scaleX(0.87);transform-origin:100% 50%;">31</div>
<div class="t" style="left:750px;top:313.7px;width:100px;text-align:right;font-family:'Liberation Mono', monospace;font-size:26.67px;line-height:44px;color:#606366;transform:scaleX(0.87);transform-origin:100% 50%;">32</div>
<div class="t" style="left:750px;top:357.7px;width:100px;text-align:right;font-family:'Liberation Mono', monospace;font-size:26.67px;line-height:44px;color:#606366;transform:scaleX(0.87);transform-origin:100% 50%;">33</div>
<div class="t" style="left:750px;top:401.7px;width:100px;text-align:right;font-family:'Liberation Mono', monospace;font-size:26.67px;line-height:44px;color:#606366;transform:scaleX(0.87);transform-origin:100% 50%;">34</div>
<div class="t" style="left:750px;top:445.7px;width:100px;text-align:right;font-family:'Liberation Mono', monospace;font-size:26.67px;line-height:44px;color:#606366;transform:scaleX(0.87);transform-origin:100% 50%;">35</div>
<div class="t" style="left:750px;top:489.7px;width:100px;text-align:right;font-family:'Liberation Mono', monospace;font-size:26.67px;line-height:44px;color:#606366;transform:scaleX(0.87);transform-origin:100% 50%;">36</div>
<div class="t" style="left:750px;top:533.7px;width:100px;text-align:right;font-family:'Liberation Mono', monospace;font-size:26.67px;line-height:44px;color:#606366;transform:scaleX(0.87);transform-origin:100% 50%;">37</div>
<div class="t" style="left:750px;top:577.7px;width:100px;text-align:right;font-family:'Liberation Mono', monospace;font-size:26.67px;line-height:44px;color:#606366;transform:scaleX(0.87);transform-origin:100% 50%;">38</div>
<div class="t" style="left:750px;top:621.7px;width:100px;text-align:right;font-family:'Liberation Mono', monospace;font-size:26.67px;line-height:44px;color:#606366;transform:scaleX(0.87);transform-origin:100% 50%;">39</div>
<div class="t" style="left:750px;top:665.7px;width:100px;text-align:right;font-family:'Liberation Mono', monospace;font-size:26.67px;line-height:44px;color:#606366;transform:scaleX(0.87);transform-origin:100% 50%;">40</div>
<div class="t" style="left:750px;top:709.7px;width:100px;text-align:right;font-family:'Liberation Mono', monospace;font-size:26.67px;line-height:44px;color:#606366;transform:scaleX(0.87);transform-origin:100% 50%;">41</div>
<div class="t" style="left:750px;top:753.7px;width:100px;text-align:right;font-family:'Liberation Mono', monospace;font-size:26.67px;line-height:44px;color:#606366;transform:scaleX(0.87);transform-origin:100% 50%;">42</div>
<div class="t" style="left:750px;top:797.7px;width:100px;text-align:right;font-family:'Liberation Mono', monospace;font-size:26.67px;line-height:44px;color:#606366;transform:scaleX(0.87);transform-origin:100% 50%;">43</div>
<div class="t" style="left:750px;top:841.7px;width:100px;text-align:right;font-family:'Liberation Mono', monospace;font-size:26.67px;line-height:44px;color:#606366;transform:scaleX(0.87);transform-origin:100% 50%;">44</div>
<div class="t" style="left:750px;top:885.7px;width:100px;text-align:right;font-family:'Liberation Mono', monospace;font-size:26.67px;line-height:44px;color:#606366;transform:scaleX(0.87);transform-origin:100% 50%;">45</div>
<div class="t" style="left:750px;top:929.7px;width:100px;text-align:right;font-family:'Liberation Mono', monospace;font-size:26.67px;line-height:44px;color:#606366;transform:scaleX(0.87);transform-origin:100% 50%;">46</div>
<div class="t" style="left:750px;top:973.7px;width:100px;text-align:right;font-family:'Liberation Mono', monospace;font-size:26.67px;line-height:44px;color:#A4A3A3;transform:scaleX(0.87);transform-origin:100% 50%;">47</div>
<div class="t" style="left:750px;top:1061.7px;width:100px;text-align:right;font-family:'Liberation Mono', monospace;font-size:26.67px;line-height:44px;color:#606366;transform:scaleX(0.87);transform-origin:100% 50%;">48</div>
<div class="t" style="left:750px;top:1105.7px;width:100px;text-align:right;font-family:'Liberation Mono', monospace;font-size:26.67px;line-height:44px;color:#606366;transform:scaleX(0.87);transform-origin:100% 50%;">49</div>
<div class="t" style="left:750px;top:1149.7px;width:100px;text-align:right;font-family:'Liberation Mono', monospace;font-size:26.67px;line-height:44px;color:#606366;transform:scaleX(0.87);transform-origin:100% 50%;">50</div>
<div class="t" style="left:750px;top:1193.7px;width:100px;text-align:right;font-family:'Liberation Mono', monospace;font-size:26.67px;line-height:44px;color:#606366;transform:scaleX(0.87);transform-origin:100% 50%;">51</div>
<div class="t" style="left:750px;top:1237.7px;width:100px;text-align:right;font-family:'Liberation Mono', monospace;font-size:26.67px;line-height:44px;color:#606366;transform:scaleX(0.87);transform-origin:100% 50%;height:20.299999999999955px;overflow:hidden;">52</div>
<svg style="left:863px;top:1116px;width:30px;height:30px" viewBox="0 0 30 30"><circle cx="10" cy="10" r="9.3" fill="#5F9A4C"/><path d="M7 5.5 H13 M10 5.5 V14.5 M7 14.5 H13" stroke="#1F2A1A" stroke-width="2"/><path d="M23 2 V24" stroke="#C75450" stroke-width="2.4"/><path d="M18 8 L23 -1 L28 8 Z" fill="#C75450"/></svg>
<div style="left:969px;top:185px;width:2px;height:699px;background:#393B3C;"></div>
<div style="left:1001px;top:185px;width:2px;height:479px;background:#393B3C;"></div>
<div style="left:1033px;top:185px;width:2px;height:83px;background:#393B3C;"></div>
<div style="left:1065px;top:185px;width:2px;height:39px;background:#393B3C;"></div>
<div style="left:1033px;top:554px;width:2px;height:66px;background:#393B3C;"></div>
<div style="left:969px;top:1148px;width:2px;height:110px;background:#393B3C;"></div>
<div style="left:1001px;top:1236px;width:2px;height:22px;background:#393B3C;"></div>
<div class="t" style="left:1100.0px;top:181.7px;font-family:'Liberation Mono', monospace;font-size:26.67px;line-height:44px;transform:scaleY(1.12);transform-origin:0 20.3px;"><span style="color:#A9B7C6;">wordSet.add(word)</span><span style="color:#CC7832;">;</span></div>
<div class="t" style="left:1068.0px;top:225.7px;font-family:'Liberation Mono', monospace;font-size:26.67px;line-height:44px;transform:scaleY(1.12);transform-origin:0 20.3px;"><span style="color:#A9B7C6;">}</span></div>
<div class="t" style="left:1036.0px;top:269.7px;font-family:'Liberation Mono', monospace;font-size:26.67px;line-height:44px;transform:scaleY(1.12);transform-origin:0 20.3px;"><span style="color:#A9B7C6;">}</span></div>
<div class="t" style="left:1036.0px;top:313.7px;font-family:'Liberation Mono', monospace;font-size:26.67px;line-height:44px;transform:scaleY(1.12);transform-origin:0 20.3px;"><span style="color:#CC7832;">int</span><span style="color:#A9B7C6;"> </span><span style="color:#A9B7C6;text-decoration:underline;text-decoration-color:#8A96AC;text-decoration-thickness:2px;text-underline-offset:1px;">i</span><span style="color:#A9B7C6;"> = </span><span style="color:#6897BB;">0</span><span style="color:#CC7832;">;</span></div>
<div class="t" style="left:1036.0px;top:357.7px;font-family:'Liberation Mono', monospace;font-size:26.67px;line-height:44px;transform:scaleY(1.12);transform-origin:0 20.3px;"><span style="color:#A9B7C6;text-decoration:underline;text-decoration-color:#8A96AC;text-decoration-thickness:2px;text-underline-offset:1px;">wordToGuess</span><span style="color:#A9B7C6;"> = </span><span style="color:#6A8759;">&quot;&quot;</span><span style="color:#CC7832;">;</span></div>
<div class="t" style="left:1036.0px;top:401.7px;font-family:'Liberation Mono', monospace;font-size:26.67px;line-height:44px;transform:scaleY(1.12);transform-origin:0 20.3px;"><span style="color:#CC7832;">int</span><span style="color:#A9B7C6;"> indexOfWord = </span><span style="color:#9876AA;font-style:italic;">RANDOM</span><span style="color:#A9B7C6;">.nextInt(wordSet.size())</span><span style="color:#CC7832;">;</span></div>
<div class="t" style="left:1036.0px;top:445.7px;font-family:'Liberation Mono', monospace;font-size:26.67px;line-height:44px;transform:scaleY(1.12);transform-origin:0 20.3px;"><span style="color:#A9B7C6;">Iterator&lt;String&gt; iterator = wordSet.iterator()</span><span style="color:#CC7832;">;</span></div>
<div class="t" style="left:1036.0px;top:489.7px;font-family:'Liberation Mono', monospace;font-size:26.67px;line-height:44px;transform:scaleY(1.12);transform-origin:0 20.3px;"><span style="color:#CC7832;">while</span><span style="color:#A9B7C6;"> (iterator.hasNext() &amp;&amp; </span><span style="color:#A9B7C6;text-decoration:underline;text-decoration-color:#8A96AC;text-decoration-thickness:2px;text-underline-offset:1px;">i</span><span style="color:#A9B7C6;"> &lt; indexOfWord) {</span></div>
<div class="t" style="left:1068.0px;top:533.7px;font-family:'Liberation Mono', monospace;font-size:26.67px;line-height:44px;transform:scaleY(1.12);transform-origin:0 20.3px;"><span style="color:#A9B7C6;text-decoration:underline;text-decoration-color:#8A96AC;text-decoration-thickness:2px;text-underline-offset:1px;">wordToGuess</span><span style="color:#A9B7C6;"> = iterator.next()</span><span style="color:#CC7832;">;</span></div>
<div class="t" style="left:1068.0px;top:577.7px;font-family:'Liberation Mono', monospace;font-size:26.67px;line-height:44px;transform:scaleY(1.12);transform-origin:0 20.3px;"><span style="color:#A9B7C6;text-decoration:underline;text-decoration-color:#8A96AC;text-decoration-thickness:2px;text-underline-offset:1px;">i</span><span style="color:#A9B7C6;"> += </span><span style="color:#6897BB;">1</span><span style="color:#CC7832;">;</span></div>
<div class="t" style="left:1036.0px;top:621.7px;font-family:'Liberation Mono', monospace;font-size:26.67px;line-height:44px;transform:scaleY(1.12);transform-origin:0 20.3px;"><span style="color:#A9B7C6;">}</span></div>
<div class="t" style="left:1004.0px;top:665.7px;font-family:'Liberation Mono', monospace;font-size:26.67px;line-height:44px;transform:scaleY(1.12);transform-origin:0 20.3px;"><span style="color:#A9B7C6;">}</span></div>
<div class="t" style="left:1004.0px;top:709.7px;font-family:'Liberation Mono', monospace;font-size:26.67px;line-height:44px;transform:scaleY(1.12);transform-origin:0 20.3px;"><span style="color:#9876AA;">guessesLeft</span><span style="color:#A9B7C6;"> = maxGuesses</span><span style="color:#CC7832;">;</span></div>
<div class="t" style="left:1004.0px;top:753.7px;font-family:'Liberation Mono', monospace;font-size:26.67px;line-height:44px;transform:scaleY(1.12);transform-origin:0 20.3px;"><span style="color:#9876AA;">charSet</span><span style="color:#A9B7C6;"> = </span><span style="color:#CC7832;">new</span><span style="color:#A9B7C6;"> TreeSet&lt;&gt;()</span><span style="color:#CC7832;">;</span></div>
<div class="t" style="left:1004.0px;top:797.7px;font-family:'Liberation Mono', monospace;font-size:26.67px;line-height:44px;transform:scaleY(1.12);transform-origin:0 20.3px;"><span style="color:#9876AA;">finalWord</span><span style="color:#A9B7C6;"> = </span><span style="color:#A9B7C6;text-decoration:underline;text-decoration-color:#8A96AC;text-decoration-thickness:2px;text-underline-offset:1px;">wordToGuess</span><span style="color:#CC7832;">;</span></div>
<div class="t" style="left:972.0px;top:885.7px;font-family:'Liberation Mono', monospace;font-size:26.67px;line-height:44px;transform:scaleY(1.12);transform-origin:0 20.3px;"><span style="color:#A9B7C6;">}</span></div>
<div class="t" style="left:972.0px;top:929.7px;font-family:'Liberation Mono', monospace;font-size:26.67px;line-height:44px;transform:scaleY(1.12);transform-origin:0 20.3px;"><span style="color:#A9B7C6;">}</span></div>
<div class="t" style="left:972.0px;top:1061.7px;font-family:'Liberation Mono', monospace;font-size:26.67px;line-height:44px;transform:scaleY(1.12);transform-origin:0 20.3px;"><span style="color:#BBB529;">@Override</span></div>
<div class="t" style="left:972.0px;top:1105.7px;font-family:'Liberation Mono', monospace;font-size:26.67px;line-height:44px;transform:scaleY(1.12);transform-origin:0 20.3px;"><span style="color:#CC7832;">public</span><span style="color:#A9B7C6;"> </span><span style="color:#CC7832;">int</span><span style="color:#A9B7C6;"> </span><span style="color:#FFC66D;">makeGuess</span><span style="color:#A9B7C6;">(</span><span style="color:#CC7832;">char</span><span style="color:#A9B7C6;"> letter) {</span></div>
<div class="t" style="left:1004.0px;top:1149.7px;font-family:'Liberation Mono', monospace;font-size:26.67px;line-height:44px;transform:scaleY(1.12);transform-origin:0 20.3px;"><span style="color:#A9B7C6;">String stringLetter = Character.</span><span style="color:#A9B7C6;font-style:italic;">toString</span><span style="color:#A9B7C6;">(letter)</span><span style="color:#CC7832;">;</span></div>
<div class="t" style="left:1004.0px;top:1193.7px;font-family:'Liberation Mono', monospace;font-size:26.67px;line-height:44px;transform:scaleY(1.12);transform-origin:0 20.3px;"><span style="color:#CC7832;">if</span><span style="color:#A9B7C6;"> (!stringLetter.equals(stringLetter.toUpperCase())){</span></div>
<div class="t" style="left:1036.0px;top:1237.7px;font-family:'Liberation Mono', monospace;font-size:26.67px;line-height:44px;transform:scaleY(1.12);transform-origin:0 20.3px;height:20.3px;overflow:hidden;"><span style="color:#CC7832;">throw</span><span style="color:#A9B7C6;"> </span><span style="color:#CC7832;">new</span><span style="color:#A9B7C6;"> IllegalArgumentException(</span><span style="color:#6A8759;">&quot;Character must be lowercase&quot;</span><span style="color:#A9B7C6;">)</span><span style="color:#CC7832;">;</span></div>
<svg style="left:987px;top:963px;width:18px;height:6px" viewBox="0 0 18 6"><path d="M1 5 L6 1 L11 5 L16 1" fill="none" stroke="#BC3F3C" stroke-width="1.8"/></svg>
<div style="left:940px;top:976px;width:4px;height:36px;background:#BBBBBB;"></div>
<div class="t" style="left:972.04px;top:1020.29px;font-family:'Liberation Sans', sans-serif;font-size:25.209px;line-height:40px;color:#787878;">3 usages</div>
<svg style="left:1101px;top:1032px;width:17px;height:17px" viewBox="0 0 17 17"><circle cx="8.5" cy="5" r="4.2" fill="#787878"/><path d="M0 17 C0 11 3.5 9.5 8.5 9.5 C13.5 9.5 17 11 17 17 Z" fill="#787878"/></svg>
<div class="t" style="left:1126.50px;top:1020.28px;font-family:'Liberation Sans', sans-serif;font-size:24.485px;line-height:40px;color:#787878;">Adam Abbas *</div>
<div style="left:2860px;top:185px;width:2px;height:4px;background:#3F4143;"></div>
<div style="left:2860px;top:234px;width:2px;height:1024px;background:#3F4143;"></div>
<svg style="left:2728px;top:202px;width:20px;height:20px" viewBox="0 0 20 20"><circle cx="10" cy="10" r="10" fill="#C7383A"/><rect x="8.3" y="4" width="3.4" height="7.5" fill="#2B2B2B"/><rect x="8.3" y="13" width="3.4" height="3.4" fill="#2B2B2B"/></svg>
<div class="t" style="left:2754.41px;top:192.26px;font-family:'Liberation Sans', sans-serif;font-size:22.727px;line-height:40px;color:#BBBBBB;">1</div>
<svg style="left:2782px;top:200px;width:24px;height:22px" viewBox="0 0 24 22"><path d="M12 0 L24 22 H0 Z" fill="#E0AE3C"/><rect x="10.3" y="7" width="3.4" height="7" fill="#2B2B2B"/><rect x="10.3" y="16" width="3.4" height="3.4" fill="#2B2B2B"/></svg>
<div class="t" style="left:2810.62px;top:192.32px;font-family:'Liberation Sans', sans-serif;font-size:27.660px;line-height:40px;color:#BBBBBB;">6</div>
<svg style="left:2842px;top:201px;width:24px;height:24px" viewBox="0 0 24 24"><path d="M1 9 L8 16 L22 2" stroke="#5FA04E" stroke-width="4" fill="none"/><path d="M0 22 L4 18 L8 22 L12 18 L16 22 L20 18 L24 22" stroke="#5FA04E" stroke-width="1.6" fill="none"/></svg>
<div class="t" style="left:2871.20px;top:192.31px;font-family:'Liberation Sans', sans-serif;font-size:26.531px;line-height:40px;color:#BBBBBB;">3</div>
<svg style="left:2907px;top:205px;width:19px;height:12px" viewBox="0 0 19 12"><path d="M1.5 10.5 L9.5 2.5 L17.5 10.5" fill="none" stroke="#AFB1B3" stroke-width="2.8"/></svg>
<svg style="left:2949px;top:206px;width:19px;height:12px" viewBox="0 0 19 12"><path d="M1.5 1.5 L9.5 9.5 L17.5 1.5" fill="none" stroke="#AFB1B3" stroke-width="2.8"/></svg>
<div style="left:2946px;top:283.5px;width:4px;height:10.5px;background:#4F7A55;"></div>
<div style="left:2946px;top:317.7px;width:4px;height:106.30000000000001px;background:#4F7A55;"></div>
<div style="left:2946px;top:457.7px;width:4px;height:204.3px;background:#4B6A91;"></div>
<div style="left:2946px;top:710px;width:4px;height:97.70000000000005px;background:#4B6A91;"></div>
<div style="left:2946px;top:890px;width:4px;height:146px;background:#4B6A91;"></div>
<div style="left:2946px;top:1084.6px;width:4px;height:7.400000000000091px;background:#4B6A91;"></div>
<div style="left:2946px;top:1132px;width:4px;height:10px;background:#4B6A91;"></div>
<div style="left:2946px;top:1182px;width:4px;height:18px;background:#4B6A91;"></div>
<div style="left:2954px;top:334px;width:28px;height:4px;background:#C9A334;"></div>
<div style="left:2954px;top:408px;width:28px;height:4px;background:#C9A334;"></div>
<div style="left:2954px;top:778px;width:28px;height:4px;background:#C9A334;"></div>
<div style="left:2954px;top:900px;width:28px;height:4px;background:#C9A334;"></div>
<div style="left:2954px;top:924px;width:28px;height:4px;background:#C9A334;"></div>
<div style="left:2954px;top:672px;width:28px;height:4px;background:#A23B37;"></div>
<div style="left:2962px;top:538px;width:14px;height:190px;background:#4C4E50;border-radius:7px;opacity:0.85;"></div>
<svg style="left:222.5px;top:1299.5px;width:27px;height:27px" viewBox="0 0 27 27"><circle cx="13.5" cy="13.5" r="13.5" fill="#B8514D"/><rect x="11.2" y="5" width="4.6" height="10" fill="#3C3F41"/><rect x="11.2" y="18" width="4.6" height="4.6" fill="#3C3F41"/></svg>
<div class="t" style="left:256.91px;top:1293.31px;font-family:'Liberation Sans', sans-serif;font-size:27.262px;line-height:40px;color:#BBBBBB;">class, interface, enum, or record expected</div>
<div class="t" style="left:769.20px;top:1293.36px;font-family:'Liberation Sans', sans-serif;font-size:31.101px;line-height:40px;color:#8C8C8C;">:61</div>
<svg style="left:222.5px;top:1339.5px;width:27px;height:27px" viewBox="0 0 27 27"><circle cx="13.5" cy="13.5" r="13.5" fill="#B8514D"/><rect x="11.2" y="5" width="4.6" height="10" fill="#3C3F41"/><rect x="11.2" y="18" width="4.6" height="4.6" fill="#3C3F41"/></svg>
<div class="t" style="left:256.91px;top:1333.31px;font-family:'Liberation Sans', sans-serif;font-size:27.262px;line-height:40px;color:#BBBBBB;">class, interface, enum, or record expected</div>
<div class="t" style="left:769.22px;top:1333.35px;font-family:'Liberation Sans', sans-serif;font-size:30.855px;line-height:40px;color:#8C8C8C;">:63</div>
<svg style="left:222.5px;top:1379.5px;width:27px;height:27px" viewBox="0 0 27 27"><circle cx="13.5" cy="13.5" r="13.5" fill="#B8514D"/><rect x="11.2" y="5" width="4.6" height="10" fill="#3C3F41"/><rect x="11.2" y="18" width="4.6" height="4.6" fill="#3C3F41"/></svg>
<div class="t" style="left:256.91px;top:1373.31px;font-family:'Liberation Sans', sans-serif;font-size:27.262px;line-height:40px;color:#BBBBBB;">class, interface, enum, or record expected</div>
<div class="t" style="left:769.22px;top:1373.35px;font-family:'Liberation Sans', sans-serif;font-size:30.855px;line-height:40px;color:#8C8C8C;">:66</div>
<svg style="left:222.5px;top:1419.5px;width:27px;height:27px" viewBox="0 0 27 27"><circle cx="13.5" cy="13.5" r="13.5" fill="#B8514D"/><rect x="11.2" y="5" width="4.6" height="10" fill="#3C3F41"/><rect x="11.2" y="18" width="4.6" height="4.6" fill="#3C3F41"/></svg>
<div class="t" style="left:256.91px;top:1413.31px;font-family:'Liberation Sans', sans-serif;font-size:27.262px;line-height:40px;color:#BBBBBB;">class, interface, enum, or record expected</div>
<div class="t" style="left:769.22px;top:1413.35px;font-family:'Liberation Sans', sans-serif;font-size:30.855px;line-height:40px;color:#8C8C8C;">:68</div>
<svg style="left:222.5px;top:1459.5px;width:27px;height:27px" viewBox="0 0 27 27"><circle cx="13.5" cy="13.5" r="13.5" fill="#B8514D"/><rect x="11.2" y="5" width="4.6" height="10" fill="#3C3F41"/><rect x="11.2" y="18" width="4.6" height="4.6" fill="#3C3F41"/></svg>
<div class="t" style="left:256.91px;top:1453.31px;font-family:'Liberation Sans', sans-serif;font-size:27.262px;line-height:40px;color:#BBBBBB;">class, interface, enum, or record expected</div>
<div class="t" style="left:769.42px;top:1453.33px;font-family:'Liberation Sans', sans-serif;font-size:28.708px;line-height:40px;color:#8C8C8C;">:71</div>
<svg style="left:222.5px;top:1499.5px;width:27px;height:27px" viewBox="0 0 27 27"><circle cx="13.5" cy="13.5" r="13.5" fill="#B8514D"/><rect x="11.2" y="5" width="4.6" height="10" fill="#3C3F41"/><rect x="11.2" y="18" width="4.6" height="4.6" fill="#3C3F41"/></svg>
<div class="t" style="left:256.91px;top:1493.31px;font-family:'Liberation Sans', sans-serif;font-size:27.262px;line-height:40px;color:#BBBBBB;">class, interface, enum, or record expected</div>
<div class="t" style="left:769.20px;top:1493.36px;font-family:'Liberation Sans', sans-serif;font-size:31.101px;line-height:40px;color:#8C8C8C;">:72</div>
<svg style="left:222.5px;top:1539.5px;width:27px;height:27px" viewBox="0 0 27 27"><circle cx="13.5" cy="13.5" r="13.5" fill="#B8514D"/><rect x="11.2" y="5" width="4.6" height="10" fill="#3C3F41"/><rect x="11.2" y="18" width="4.6" height="4.6" fill="#3C3F41"/></svg>
<div class="t" style="left:256.91px;top:1533.31px;font-family:'Liberation Sans', sans-serif;font-size:27.262px;line-height:40px;color:#BBBBBB;">class, interface, enum, or record expected</div>
<div class="t" style="left:769.20px;top:1533.36px;font-family:'Liberation Sans', sans-serif;font-size:31.101px;line-height:40px;color:#8C8C8C;">:72</div>
<svg style="left:222.5px;top:1579.5px;width:27px;height:27px" viewBox="0 0 27 27"><circle cx="13.5" cy="13.5" r="13.5" fill="#B8514D"/><rect x="11.2" y="5" width="4.6" height="10" fill="#3C3F41"/><rect x="11.2" y="18" width="4.6" height="4.6" fill="#3C3F41"/></svg>
<div class="t" style="left:256.91px;top:1573.31px;font-family:'Liberation Sans', sans-serif;font-size:27.262px;line-height:40px;color:#BBBBBB;">class, interface, enum, or record expected</div>
<div class="t" style="left:769.24px;top:1573.35px;font-family:'Liberation Sans', sans-serif;font-size:30.613px;line-height:40px;color:#8C8C8C;">:74</div>
<svg style="left:222.5px;top:1619.5px;width:27px;height:27px" viewBox="0 0 27 27"><circle cx="13.5" cy="13.5" r="13.5" fill="#B8514D"/><rect x="11.2" y="5" width="4.6" height="10" fill="#3C3F41"/><rect x="11.2" y="18" width="4.6" height="4.6" fill="#3C3F41"/></svg>
<div class="t" style="left:256.91px;top:1613.31px;font-family:'Liberation Sans', sans-serif;font-size:27.262px;line-height:40px;color:#BBBBBB;">class, interface, enum, or record expected</div>
<div class="t" style="left:769.22px;top:1613.35px;font-family:'Liberation Sans', sans-serif;font-size:30.855px;line-height:40px;color:#8C8C8C;">:76</div>
<svg style="left:222.5px;top:1659.5px;width:27px;height:27px" viewBox="0 0 27 27"><circle cx="13.5" cy="13.5" r="13.5" fill="#B8514D"/><rect x="11.2" y="5" width="4.6" height="10" fill="#3C3F41"/><rect x="11.2" y="18" width="4.6" height="4.6" fill="#3C3F41"/></svg>
<div class="t" style="left:256.91px;top:1653.31px;font-family:'Liberation Sans', sans-serif;font-size:27.262px;line-height:40px;color:#BBBBBB;">class, interface, enum, or record expected</div>
<div class="t" style="left:769.22px;top:1653.35px;font-family:'Liberation Sans', sans-serif;font-size:30.855px;line-height:40px;color:#8C8C8C;">:78</div>
<svg style="left:222.5px;top:1699.5px;width:27px;height:27px" viewBox="0 0 27 27"><circle cx="13.5" cy="13.5" r="13.5" fill="#B8514D"/><rect x="11.2" y="5" width="4.6" height="10" fill="#3C3F41"/><rect x="11.2" y="18" width="4.6" height="4.6" fill="#3C3F41"/></svg>
<div class="t" style="left:256.91px;top:1693.31px;font-family:'Liberation Sans', sans-serif;font-size:27.262px;line-height:40px;color:#BBBBBB;">class, interface, enum, or record expected</div>
<div class="t" style="left:769.22px;top:1693.35px;font-family:'Liberation Sans', sans-serif;font-size:30.855px;line-height:40px;color:#8C8C8C;">:78</div>
<svg style="left:222.5px;top:1739.5px;width:27px;height:27px" viewBox="0 0 27 27"><circle cx="13.5" cy="13.5" r="13.5" fill="#B8514D"/><rect x="11.2" y="5" width="4.6" height="10" fill="#3C3F41"/><rect x="11.2" y="18" width="4.6" height="4.6" fill="#3C3F41"/></svg>
<div class="t" style="left:256.91px;top:1733.31px;font-family:'Liberation Sans', sans-serif;font-size:27.262px;line-height:40px;color:#BBBBBB;">class, interface, enum, or record expected</div>
<div class="t" style="left:769.22px;top:1733.35px;font-family:'Liberation Sans', sans-serif;font-size:30.855px;line-height:40px;color:#8C8C8C;">:78</div>
<svg style="left:222.5px;top:1779.5px;width:27px;height:27px" viewBox="0 0 27 27"><circle cx="13.5" cy="13.5" r="13.5" fill="#B8514D"/><rect x="11.2" y="5" width="4.6" height="10" fill="#3C3F41"/><rect x="11.2" y="18" width="4.6" height="4.6" fill="#3C3F41"/></svg>
<div class="t" style="left:256.91px;top:1773.31px;font-family:'Liberation Sans', sans-serif;font-size:27.262px;line-height:40px;color:#BBBBBB;">class, interface, enum, or record expected</div>
<div class="t" style="left:769.20px;top:1773.36px;font-family:'Liberation Sans', sans-serif;font-size:31.101px;line-height:40px;color:#8C8C8C;">:81</div>
<svg style="left:222.5px;top:1819.5px;width:27px;height:27px" viewBox="0 0 27 27"><circle cx="13.5" cy="13.5" r="13.5" fill="#B8514D"/><rect x="11.2" y="5" width="4.6" height="10" fill="#3C3F41"/><rect x="11.2" y="18" width="4.6" height="4.6" fill="#3C3F41"/></svg>
<div class="t" style="left:256.91px;top:1813.31px;font-family:'Liberation Sans', sans-serif;font-size:27.262px;line-height:40px;color:#BBBBBB;">class, interface, enum, or record expected</div>
<div class="t" style="left:769.20px;top:1813.36px;font-family:'Liberation Sans', sans-serif;font-size:31.101px;line-height:40px;color:#8C8C8C;">:91</div>
<svg style="left:222.5px;top:1859.5px;width:27px;height:27px" viewBox="0 0 27 27"><circle cx="13.5" cy="13.5" r="13.5" fill="#B8514D"/><rect x="11.2" y="5" width="4.6" height="10" fill="#3C3F41"/><rect x="11.2" y="18" width="4.6" height="4.6" fill="#3C3F41"/></svg>
<div class="t" style="left:256.91px;top:1853.31px;font-family:'Liberation Sans', sans-serif;font-size:27.262px;line-height:40px;color:#BBBBBB;">class, interface, enum, or record expected</div>
<div class="t" style="left:769.24px;top:1853.35px;font-family:'Liberation Sans', sans-serif;font-size:30.613px;line-height:40px;color:#8C8C8C;">:94</div>
<div style="left:42px;top:1258px;width:2940px;height:2px;background:#323232;"></div>
<div style="left:42px;top:1260px;width:2940px;height:51px;background:#3D3F41;"></div>
<div style="left:42px;top:1311px;width:2940px;height:2px;background:#323232;"></div>
<div class="t" style="left:51.70px;top:1266.83px;font-family:'Liberation Sans', sans-serif;font-size:28.711px;line-height:40px;color:#BBBBBB;">Build:</div>
<div class="t" style="left:157.76px;top:1266.82px;font-family:'Liberation Sans', sans-serif;font-size:28.015px;line-height:40px;color:#BBBBBB;">Build Output</div>
<svg style="left:327px;top:1278.5px;width:16px;height:16px" viewBox="0 0 16 16"><path d="M1 1 L15 15 M15 1 L1 15" stroke="#6E7073" stroke-width="2"/></svg>
<div style="left:136px;top:1307px;width:227px;height:4px;background:#6B6E70;border-radius:2px;"></div>
<svg style="left:2891px;top:1273px;width:25px;height:25px" viewBox="0 0 25 25"><rect x="9.7" y="0" width="5.6" height="12.5" fill="#AFB1B3" transform="rotate(0 12.5 12.5)"/><rect x="9.7" y="0" width="5.6" height="12.5" fill="#AFB1B3" transform="rotate(60 12.5 12.5)"/><rect x="9.7" y="0" width="5.6" height="12.5" fill="#AFB1B3" transform="rotate(120 12.5 12.5)"/><rect x="9.7" y="0" width="5.6" height="12.5" fill="#AFB1B3" transform="rotate(180 12.5 12.5)"/><rect x="9.7" y="0" width="5.6" height="12.5" fill="#AFB1B3" transform="rotate(240 12.5 12.5)"/><rect x="9.7" y="0" width="5.6" height="12.5" fill="#AFB1B3" transform="rotate(300 12.5 12.5)"/><circle cx="12.5" cy="12.5" r="9.0" fill="#AFB1B3"/><circle cx="12.5" cy="12.5" r="3.8" fill="#3C3F41"/></svg>
<div style="left:2944px;top:1284px;width:24px;height:4px;background:#AFB1B3;"></div>
<svg style="left:51.9px;top:1328.7px;width:33.0px;height:30.0px" viewBox="0 0 33 30"><path d="M2 12.3 L13.2 1.4 L20 1.4 L20 2.6 L14.6 7.6 L21.4 14 L23.2 14.4 L32 24 L27.6 28.8 L17.3 18.8 L17.3 17.6 L10.2 11.1 L6.1 15.8 Z" fill="#5E9B5A"/></svg>
<div style="left:60px;top:1386px;width:20px;height:20px;background:#5A5C5E;"></div>
<div style="left:50px;top:1428px;width:40px;height:2px;background:#555759;"></div>
<svg style="left:0px;top:1400px;width:100px;height:100px" viewBox="0 1400 100 100"><path d="M56.9 1471.3 L61.6 1475.9 L75 1462.5 L70.3 1457.9 Z" fill="#AFB1B3"/><circle cx="76" cy="1456" r="8.2" fill="#AFB1B3"/><path d="M73.8 1454.4 L81 1447.2 L86.5 1452.7 L77.9 1459 Z" fill="#3C3F41"/></svg>
<div style="left:50px;top:1494px;width:40px;height:2px;background:#555759;"></div>
<svg style="left:0px;top:0px;width:0px;height:0px" viewBox="0 0 0 0"></svg>
<svg style="left:0px;top:0px;width:100px;height:1600px" viewBox="0 0 100 1600"><path d="M61 1522.6 L68.6 1522.6 L73.8 1513.8 L84.3 1523.1 L75.5 1529 L75 1536.5 L69.7 1531.9 L55.7 1542.4 L66.2 1527.8 Z" fill="#AFB1B3"/></svg>
<svg style="left:55px;top:1568px;width:34px;height:32px" viewBox="0 0 34 32"><path d="M1 12 C7 -1.4 23 -1.4 29 12 C23 25.4 7 25.4 1 12 Z" fill="#AFB1B3"/><circle cx="15" cy="12" r="6.8" fill="#3C3F41"/><circle cx="15" cy="12" r="4.2" fill="#AFB1B3"/><path d="M21 24 H33 L27 30 Z" fill="#AFB1B3"/></svg>
<div class="t" style="left:1074px;top:1315.7px;width:1852px;overflow:hidden;font-family:'Liberation Mono', monospace;font-size:26.67px;line-height:44px;transform:scaleY(1.12);transform-origin:0 20.3px;color:#548AF7;text-decoration:underline;text-decoration-thickness:2px;text-underline-offset:2px;">/Users/aviswesh/Caltech/year1/quarter2/cs2/project02-aviswesh/src/edu/caltech/cs2/project02/choosers/RandomHangmanChooser.java</div>
<div class="t" style="left:1074px;top:1360.7px;font-family:'Liberation Mono', monospace;font-size:26.67px;line-height:44px;transform:scaleY(1.12);transform-origin:0 20.3px;color:#F0776B;">java: class, interface, enum, or record expected</div>
<svg style="left:2941px;top:1331px;width:27px;height:28px" viewBox="0 0 27 28"><rect x="0" y="0" width="24" height="3.5" fill="#AFB1B3"/><rect x="0" y="9" width="18" height="3.5" fill="#AFB1B3"/><path d="M18 10.75 H21 C25 10.75 26 13 26 16 C26 19 25 21 21 21 H10" fill="none" stroke="#AFB1B3" stroke-width="3.5"/><path d="M13 15 L8 21 L13 27 Z" fill="#AFB1B3"/><rect x="0" y="19" width="6" height="3.5" fill="#AFB1B3"/></svg>
<svg style="left:2941px;top:1382px;width:26px;height:26px" viewBox="0 0 26 26"><rect x="0" y="4" width="8" height="3.5" fill="#AFB1B3"/><rect x="0" y="12" width="8" height="3.5" fill="#AFB1B3"/><rect x="0" y="21" width="24" height="3.5" fill="#AFB1B3"/><path d="M17 0 V12" stroke="#AFB1B3" stroke-width="3"/><path d="M11 11 H23 L17 18 Z" fill="#AFB1B3"/></svg>
<div style="left:0px;top:1881px;width:3024px;height:1px;background:#323232;"></div>
<div style="left:0px;top:1882px;width:3024px;height:40px;background:#3D3F41;"></div>
<div style="left:0px;top:1922px;width:3024px;height:1px;background:#323232;"></div>
<div style="left:0px;top:1923px;width:3024px;height:41px;background:#3D3F41;"></div>
<svg style="left:61px;top:1889px;width:20px;height:27px" viewBox="0 0 20 27"><circle cx="4" cy="4" r="3.3" fill="#AFB1B3"/><circle cx="4" cy="23" r="3.3" fill="#AFB1B3"/><circle cx="16" cy="6" r="3.3" fill="#AFB1B3"/><path d="M4 4 V23 M16 6 C16 14 5 13 4 20" fill="none" stroke="#AFB1B3" stroke-width="2.6"/></svg>
<div class="t" style="left:91.24px;top:1882.27px;font-family:'Liberation Sans', sans-serif;font-size:23.252px;line-height:40px;color:#BBBBBB;">Git</div>
<svg style="left:163.5px;top:1893px;width:17px;height:19px" viewBox="0 0 17 19"><path d="M0 0 L17 9.5 L0 19 Z" fill="#AFB1B3"/></svg>
<div class="t" style="left:192.69px;top:1882.26px;font-family:'Liberation Sans', sans-serif;font-size:22.669px;line-height:40px;color:#BBBBBB;">Run</div>
<svg style="left:274px;top:1893px;width:20px;height:19px" viewBox="0 0 20 19"><g fill="#AFB1B3"><rect x="0" y="0" width="3.5" height="3.5"/><rect x="6" y="0" width="14" height="3.5"/><rect x="0" y="7.5" width="3.5" height="3.5"/><rect x="6" y="7.5" width="14" height="3.5"/><rect x="0" y="15" width="3.5" height="3.5"/><rect x="6" y="15" width="14" height="3.5"/></g></svg>
<div class="t" style="left:304.16px;top:1882.25px;font-family:'Liberation Sans', sans-serif;font-size:21.907px;line-height:40px;color:#BBBBBB;">TODO</div>
<svg style="left:411px;top:1892px;width:21px;height:21px" viewBox="0 0 21 21"><circle cx="10.5" cy="10.5" r="10.5" fill="#C75450"/><rect x="8.7" y="4" width="3.6" height="8" fill="#3C3F41"/><rect x="8.7" y="14" width="3.6" height="3.6" fill="#3C3F41"/></svg>
<div class="t" style="left:440.09px;top:1882.27px;font-family:'Liberation Sans', sans-serif;font-size:23.823px;line-height:40px;color:#BBBBBB;">Problems</div>
<svg style="left:584px;top:1892px;width:22px;height:21px" viewBox="0 0 22 21"><rect x="0" y="0" width="22" height="21" fill="#AFB1B3"/><path d="M4 5 L9 9 L4 13" fill="none" stroke="#3C3F41" stroke-width="2"/><rect x="10" y="15" width="8" height="2" fill="#3C3F41"/></svg>
<div class="t" style="left:616.33px;top:1882.27px;font-family:'Liberation Sans', sans-serif;font-size:23.318px;line-height:40px;color:#BBBBBB;">Terminal</div>
<svg style="left:746px;top:1889px;width:26px;height:27px" viewBox="0 0 26 27"><path d="M7 0 H19 L26 13.5 L19 27 H7 L0 13.5 Z" fill="#AFB1B3"/><path d="M10 7 L19 13.5 L10 20 Z" fill="#3C3F41"/></svg>
<div class="t" style="left:779.06px;top:1882.27px;font-family:'Liberation Sans', sans-serif;font-size:23.589px;line-height:40px;color:#BBBBBB;">Services</div>
<div style="left:890px;top:1882px;width:124px;height:40px;background:#2D2F30;"></div>
<svg style="left:907.2px;top:1890.7px;width:29.7px;height:27.0px" viewBox="0 0 33 30"><path d="M2 12.3 L13.2 1.4 L20 1.4 L20 2.6 L14.6 7.6 L21.4 14 L23.2 14.4 L32 24 L27.6 28.8 L17.3 18.8 L17.3 17.6 L10.2 11.1 L6.1 15.8 Z" fill="#AFB1B3"/></svg>
<div class="t" style="left:942.05px;top:1883.28px;font-family:'Liberation Sans', sans-serif;font-size:24.431px;line-height:40px;color:#FFFFFF;">Build</div>
<svg style="left:11px;top:1925px;width:27px;height:31px" viewBox="0 0 27 31"><path d="M6 1.5 H24.5 V24 H6 Z" fill="none" stroke="#AFB1B3" stroke-width="2"/><path d="M2 7 V28.5 H21" fill="none" stroke="#AFB1B3" stroke-width="2"/></svg>
<div class="t" style="left:61.10px;top:1924.27px;font-family:'Liberation Sans', sans-serif;font-size:23.710px;line-height:40px;color:#BBBBBB;">Build completed with 27 errors and 0 warnings in 625 ms (a minute ago)</div>
<div class="t" style="left:2509.54px;top:1924.26px;font-family:'Liberation Sans', sans-serif;font-size:22.871px;line-height:40px;color:#BBBBBB;">47:1</div>
<div class="t" style="left:2576.11px;top:1924.27px;font-family:'Liberation Sans', sans-serif;font-size:23.671px;line-height:40px;color:#BBBBBB;">LF</div>
<div class="t" style="left:2626.28px;top:1924.28px;font-family:'Liberation Sans', sans-serif;font-size:24.570px;line-height:40px;color:#BBBBBB;">UTF-8</div>
<div class="t" style="left:2718.81px;top:1924.27px;font-family:'Liberation Sans', sans-serif;font-size:23.866px;line-height:40px;color:#BBBBBB;">2 spaces*</div>
<svg style="left:2851px;top:1929px;width:21px;height:30px" viewBox="0 0 21 30"><circle cx="4" cy="4" r="3.3" fill="#AFB1B3"/><circle cx="4" cy="26" r="3.3" fill="#AFB1B3"/><circle cx="17" cy="6" r="3.3" fill="#AFB1B3"/><path d="M4 4 V26 M17 6 C17 15 5 14 4 22" fill="none" stroke="#AFB1B3" stroke-width="2.6"/></svg>
<div class="t" style="left:2880.55px;top:1924.28px;font-family:'Liberation Sans', sans-serif;font-size:24.136px;line-height:40px;color:#BBBBBB;">master</div>
<svg style="left:2973px;top:1932px;width:24px;height:24px" viewBox="0 0 24 24"><path d="M3 10 V6 C3 2 6 0 9 0 C12 0 15 2 15 6" fill="none" stroke="#AFB1B3" stroke-width="2.6"/><rect x="6" y="10" width="18" height="14" fill="#AFB1B3"/></svg>
<div style="left:0px;top:132px;width:40px;height:1749px;background:#3D3F41;"></div>
<div style="left:40px;top:132px;width:2px;height:1749px;background:#323232;"></div>
<div style="left:0px;top:132px;width:40px;height:145px;background:#2D2F30;"></div>
<div class="t" style="left:0.28px;top:223.92px;font-family:'Liberation Sans', sans-serif;font-size:24.057px;line-height:40px;color:#E0E0E0;transform-origin:0 0;transform:rotate(-90deg);">Project</div>
<svg style="left:10px;top:235px;width:22px;height:19px" viewBox="0 0 22 19"><path d="M0 0 H8 L11 4 H22 V19 H0 Z" fill="#AFB1B3"/></svg>
<div class="t" style="left:0.27px;top:380.59px;font-family:'Liberation Sans', sans-serif;font-size:23.730px;line-height:40px;color:#AFB1B3;transform-origin:0 0;transform:rotate(-90deg);">Commit</div>
<svg style="left:8px;top:392px;width:26px;height:17px" viewBox="0 0 26 17"><circle cx="13" cy="8.5" r="6" fill="none" stroke="#AFB1B3" stroke-width="3.5"/><rect x="0" y="7" width="6" height="3.2" fill="#AFB1B3"/><rect x="20" y="7" width="6" height="3.2" fill="#AFB1B3"/></svg>
<div class="t" style="left:0.28px;top:1629.98px;font-family:'Liberation Sans', sans-serif;font-size:24.491px;line-height:40px;color:#AFB1B3;transform-origin:0 0;transform:rotate(-90deg);">Structure</div>
<svg style="left:12px;top:1642px;width:19px;height:19px" viewBox="0 0 19 19"><rect x="0" y="9" width="8" height="8" fill="#AFB1B3"/><rect x="10" y="0" width="8" height="8" fill="#AFB1B3"/><rect x="10" y="10" width="8" height="8" fill="#AFB1B3"/></svg>
<div class="t" style="left:0.27px;top:1822.89px;font-family:'Liberation Sans', sans-serif;font-size:23.572px;line-height:40px;color:#AFB1B3;transform-origin:0 0;transform:rotate(-90deg);">Bookmarks</div>
<svg style="left:12px;top:1831px;width:19px;height:23px" viewBox="0 0 19 23"><path d="M0 0 H19 V23 L9.5 15 L0 23 Z" fill="#AFB1B3"/></svg>
<div style="left:2982px;top:132px;width:2px;height:1749px;background:#323232;"></div>
<div style="left:2984px;top:132px;width:40px;height:1749px;background:#3D3F41;"></div>
<svg style="left:2991px;top:154px;width:26px;height:27px" viewBox="0 0 26 27"><path d="M2 19 C5 16 5 12 5 9 C5 4 8 2 12 2 C16 2 19 4 19 9 C19 12 19 16 22 19 Z" fill="#AFB1B3"/><path d="M8 21 C8 25 16 25 16 21 Z" fill="#AFB1B3"/><circle cx="19.5" cy="5" r="6.5" fill="#3C3F41"/><circle cx="19.5" cy="5" r="5" fill="#C75450"/></svg>
<div class="t" style="left:3023.22px;top:187.04px;font-family:'Liberation Sans', sans-serif;font-size:24.472px;line-height:40px;color:#AFB1B3;transform-origin:0 0;transform:rotate(90deg);">Notifications</div>
</body></html>
